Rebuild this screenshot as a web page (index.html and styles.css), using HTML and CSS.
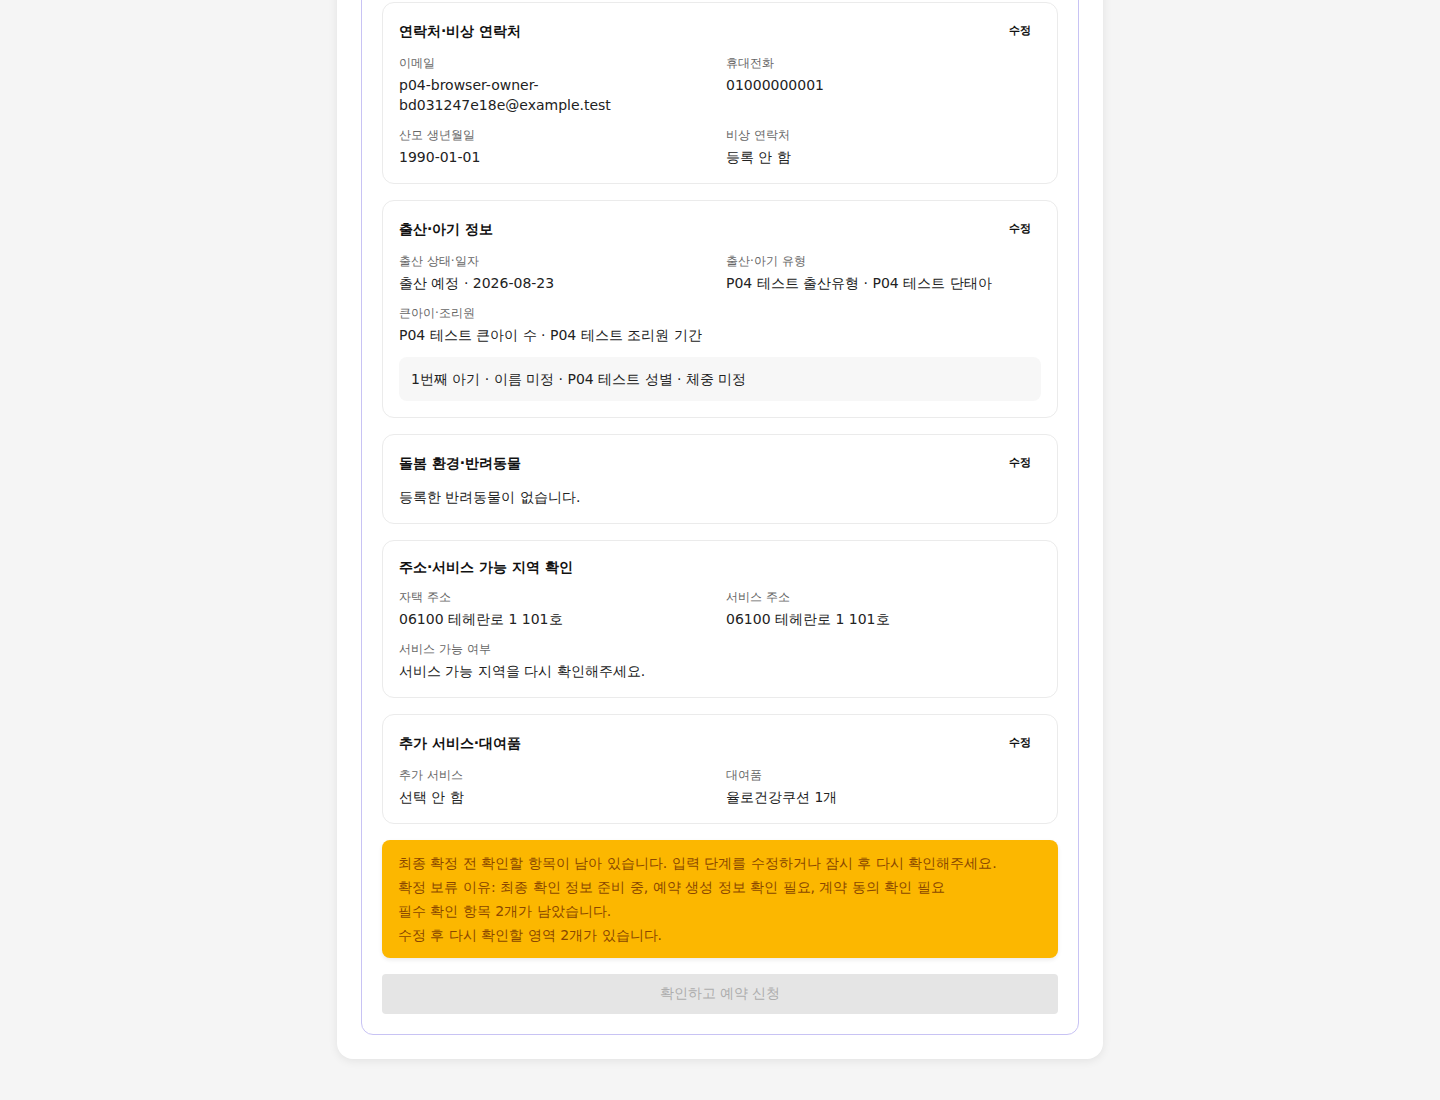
FILE: index.html
```html
<!DOCTYPE html>
<html>
<head>
  <meta charset="UTF-8">
  <meta name="viewport" content="width=device-width, initial-scale=1.0">
  <title>예약 확인</title>
  <link rel="stylesheet" href="styles.css">
</head>
<body>
<div class="page">
  <div class="shell">
    <div class="review">

      <!-- 연락처 -->
      <section class="card">
        <div class="card-head">
          <h3>연락처·비상 연락처</h3>
          <button class="edit">수정</button>
        </div>
        <div class="fields">
          <div class="field">
            <span class="label">이메일</span>
            <span class="value">p04-browser-owner-bd031247e18e@example.test</span>
          </div>
          <div class="field">
            <span class="label">휴대전화</span>
            <span class="value">01000000001</span>
          </div>
          <div class="field">
            <span class="label">산모 생년월일</span>
            <span class="value">1990-01-01</span>
          </div>
          <div class="field">
            <span class="label">비상 연락처</span>
            <span class="value">등록 안 함</span>
          </div>
        </div>
      </section>

      <!-- 출산 -->
      <section class="card">
        <div class="card-head">
          <h3>출산·아기 정보</h3>
          <button class="edit">수정</button>
        </div>
        <div class="fields">
          <div class="field">
            <span class="label">출산 상태·일자</span>
            <span class="value">출산 예정 · 2026-08-23</span>
          </div>
          <div class="field">
            <span class="label">출산·아기 유형</span>
            <span class="value">P04 테스트 출산유형 · P04 테스트 단태아</span>
          </div>
          <div class="field">
            <span class="label">큰아이·조리원</span>
            <span class="value">P04 테스트 큰아이 수 · P04 테스트 조리원 기간</span>
          </div>
        </div>
        <div class="baby">1번째 아기 · 이름 미정 · P04 테스트 성별 · 체중 미정</div>
      </section>

      <!-- 돌봄 환경 -->
      <section class="card">
        <div class="card-head">
          <h3>돌봄 환경·반려동물</h3>
          <button class="edit">수정</button>
        </div>
        <p class="plain">등록한 반려동물이 없습니다.</p>
      </section>

      <!-- 주소 -->
      <section class="card">
        <div class="card-head no-edit">
          <h3>주소·서비스 가능 지역 확인</h3>
        </div>
        <div class="fields">
          <div class="field">
            <span class="label">자택 주소</span>
            <span class="value">06100 테헤란로 1 101호</span>
          </div>
          <div class="field">
            <span class="label">서비스 주소</span>
            <span class="value">06100 테헤란로 1 101호</span>
          </div>
          <div class="field">
            <span class="label">서비스 가능 여부</span>
            <span class="value">서비스 가능 지역을 다시 확인해주세요.</span>
          </div>
        </div>
      </section>

      <!-- 추가 서비스 -->
      <section class="card">
        <div class="card-head">
          <h3>추가 서비스·대여품</h3>
          <button class="edit">수정</button>
        </div>
        <div class="fields">
          <div class="field">
            <span class="label">추가 서비스</span>
            <span class="value">선택 안 함</span>
          </div>
          <div class="field">
            <span class="label">대여품</span>
            <span class="value">율로건강쿠션 1개</span>
          </div>
        </div>
      </section>

      <div class="notice">
        <p>최종 확정 전 확인할 항목이 남아 있습니다. 입력 단계를 수정하거나 잠시 후 다시 확인해주세요.</p>
        <p>확정 보류 이유: 최종 확인 정보 준비 중, 예약 생성 정보 확인 필요, 계약 동의 확인 필요</p>
        <p>필수 확인 항목 2개가 남았습니다.</p>
        <p>수정 후 다시 확인할 영역 2개가 있습니다.</p>
      </div>

      <button class="submit" disabled>확인하고 예약 신청</button>
    </div>
  </div>
</div>
</body>
</html>
```

FILE: styles.css
```css
* {
    box-sizing: border-box;
}

body {
    margin: 0;
    background-color: #f5f5f5;
    font-family: "DejaVu Sans", sans-serif;
    color: #222;
}

.page {
    display: flex;
    justify-content: center;
    padding-bottom: 41px;
    overflow: hidden;
}

.shell {
    width: 766px;
    margin-top: -43px;
    padding: 24px;
    background-color: #fff;
    border-radius: 16px;
    box-shadow: 0 2px 10px rgba(0, 0, 0, 0.08);
}

.review {
    display: flex;
    flex-direction: column;
    gap: 16px;
    padding: 20px;
    border: 1px solid #c8c3f4;
    border-radius: 12px;
}

.card {
    display: flex;
    flex-direction: column;
    gap: 12px;
    padding: 16px;
    border: 1px solid #ebebeb;
    border-radius: 12px;
    background-color: #fff;
}

.card-head {
    display: flex;
    justify-content: space-between;
    align-items: center;
    height: 24px;
}

.card-head.no-edit {
    height: 20px;
}

.card-head h3 {
    margin: 0;
    font-size: 14px;
    line-height: 20px;
    font-weight: bold;
    color: #111;
}

.edit {
    height: 24px;
    margin-top: -2px;
    padding: 0 10px;
    border: none;
    background: none;
    font-family: inherit;
    font-size: 11px;
    font-weight: 600;
    color: #111;
    cursor: pointer;
}

.fields {
    display: grid;
    grid-template-columns: 1fr 1fr;
    column-gap: 12px;
    row-gap: 12px;
}

.field {
    display: flex;
    flex-direction: column;
    gap: 4px;
}

.label {
    font-size: 12px;
    line-height: 16px;
    color: #666;
}

.value {
    font-size: 14px;
    line-height: 20px;
    color: #222;
    word-break: break-word;
}

.plain {
    margin: 0;
    font-size: 14px;
    line-height: 20px;
}

.baby {
    padding: 12px;
    border-radius: 8px;
    background-color: #f7f7f7;
    font-size: 14px;
    line-height: 20px;
}

.notice {
    display: flex;
    flex-direction: column;
    gap: 4px;
    padding: 13px 16px;
    border-radius: 8px;
    background-color: #fcb700;
    color: #8a4700;
    box-shadow: 0 2px 4px rgba(0, 0, 0, 0.08);
}

.notice p {
    margin: 0;
    font-size: 14px;
    line-height: 20px;
}

.submit {
    height: 40px;
    border: none;
    border-radius: 4px;
    background-color: #e5e5e5;
    color: #adadad;
    font-family: inherit;
    font-size: 14px;
}
```
